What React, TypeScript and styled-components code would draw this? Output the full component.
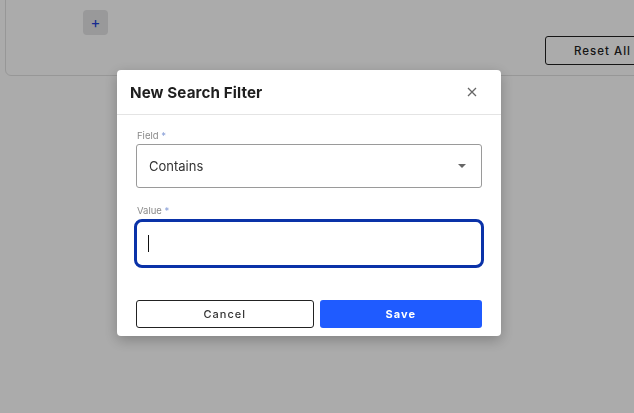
import styled, { createGlobalStyle } from "styled-components";

const GlobalStyle = createGlobalStyle`
  body {
    margin: 0;
    background: #fff;
    font-family: Inter, "Noto Sans", sans-serif;
    overflow: hidden;
  }
`;

const App = () => {
  return (
    <>
      <GlobalStyle />
      <Page>
        <FilterCard>
          <AddButton>+</AddButton>
          <CardFooter>
            <ResetButton>Reset All</ResetButton>
          </CardFooter>
        </FilterCard>
      </Page>
      <Overlay>
        <Modal>
          <ModalHeader>
            <ModalTitle>New Search Filter</ModalTitle>
            <CloseButton aria-label="close">
              <svg width="10" height="10" viewBox="0 0 10 10">
                <path d="M1 1L9 9M9 1L1 9" stroke="#666" strokeWidth="1.3" />
              </svg>
            </CloseButton>
          </ModalHeader>
          <ModalBody>
            <FieldGroup>
              <Label>
                Field <Req>*</Req>
              </Label>
              <SelectBox>
                <span>Contains</span>
                <Caret />
              </SelectBox>
            </FieldGroup>
            <FieldGroup>
              <Label>
                Value <Req>*</Req>
              </Label>
              <ValueInput>
                <Cursor />
              </ValueInput>
            </FieldGroup>
            <Actions>
              <CancelButton>Cancel</CancelButton>
              <SaveButton>Save</SaveButton>
            </Actions>
          </ModalBody>
        </Modal>
      </Overlay>
    </>
  );
};

const Page = styled.div`
  height: 413px;
  padding-left: 5px;
`;

const FilterCard = styled.div`
  margin-top: -12px;
  margin-right: -20px;
  height: 88px;
  border: 1px solid #e2e2e2;
  border-radius: 6px;
  padding: 21px 0 0 77px;
  box-sizing: border-box;
  background: #fff;
`;

const AddButton = styled.button`
  width: 25px;
  height: 25px;
  border: none;
  border-radius: 4px;
  background: #e4e4e6;
  color: #2340d8;
  font-size: 15px;
  line-height: 25px;
  padding: 0;
  font-family: Inter, sans-serif;
`;

const CardFooter = styled.div`
  display: flex;
  justify-content: flex-end;
  margin-top: 1px;
`;

const ResetButton = styled.button`
  width: 100px;
  height: 29px;
  margin-right: 8px;
  background: transparent;
  border: 1px solid #222;
  border-radius: 3px;
  color: #222;
  font-family: Inter, sans-serif;
  font-size: 11.5px;
  font-weight: 500;
  letter-spacing: 1px;
  text-align: left;
  padding-left: 28px;
  white-space: nowrap;
`;

const Overlay = styled.div`
  position: fixed;
  inset: 0;
  background: rgba(0, 0, 0, 0.33);
  display: flex;
  justify-content: center;
  align-items: flex-start;
  padding: 70px 16px 0 0;
`;

const Modal = styled.div`
  width: 384px;
  background: #fff;
  border-radius: 4px;
  box-shadow: 0 4px 14px rgba(0, 0, 0, 0.25);
`;

const ModalHeader = styled.div`
  height: 44px;
  display: flex;
  align-items: center;
  justify-content: space-between;
  padding: 0 24px 0 13px;
  border-bottom: 1px solid #e4e4e4;
`;

const ModalTitle = styled.h2`
  margin: 0;
  font-size: 15.2px;
  font-weight: 700;
  color: #1f1f1f;
  letter-spacing: 0.1px;
`;

const CloseButton = styled.button`
  border: none;
  background: none;
  padding: 0;
  display: flex;
`;

const ModalBody = styled.div`
  padding: 15px 19px 8px 19px;
`;

const FieldGroup = styled.div`
  margin-bottom: 17px;
  &:nth-child(2) {
    margin-bottom: 32px;
  }
`;

const Label = styled.div`
  font-size: 9.5px;
  color: #8a8a8a;
  line-height: 12px;
  margin-bottom: 2px;
  margin-left: 1px;
`;

const Req = styled.span`
  color: #8aa0d8;
`;

const SelectBox = styled.div`
  height: 44px;
  box-sizing: border-box;
  border: 1px solid #9a9a9a;
  border-radius: 3px;
  display: flex;
  align-items: center;
  justify-content: space-between;
  padding: 0 15px 0 12px;
  font-size: 13px;
  color: #333;
`;

const Caret = styled.span`
  width: 0;
  height: 0;
  border-left: 4.5px solid transparent;
  border-right: 4.5px solid transparent;
  border-top: 4.5px solid #666;
`;

const ValueInput = styled.div`
  height: 49px;
  margin: 0 -2px;
  box-sizing: border-box;
  border: 3px solid #0a32a8;
  border-radius: 8px;
  display: flex;
  align-items: center;
  padding-left: 11px;
`;

const Cursor = styled.span`
  width: 1px;
  height: 17px;
  background: #111;
`;

const Actions = styled.div`
  display: grid;
  grid-template-columns: 177fr 162fr;
  gap: 6px;
`;

const BaseButton = styled.button`
  height: 28px;
  border-radius: 3px;
  font-family: Inter, sans-serif;
  font-size: 11px;
  letter-spacing: 1px;
`;

const CancelButton = styled(BaseButton)`
  background: #fff;
  border: 1px solid #222;
  color: #333;
  font-weight: 500;
`;

const SaveButton = styled(BaseButton)`
  background: #1f5bff;
  border: none;
  color: #fff;
  font-weight: 700;
`;

export default App;
